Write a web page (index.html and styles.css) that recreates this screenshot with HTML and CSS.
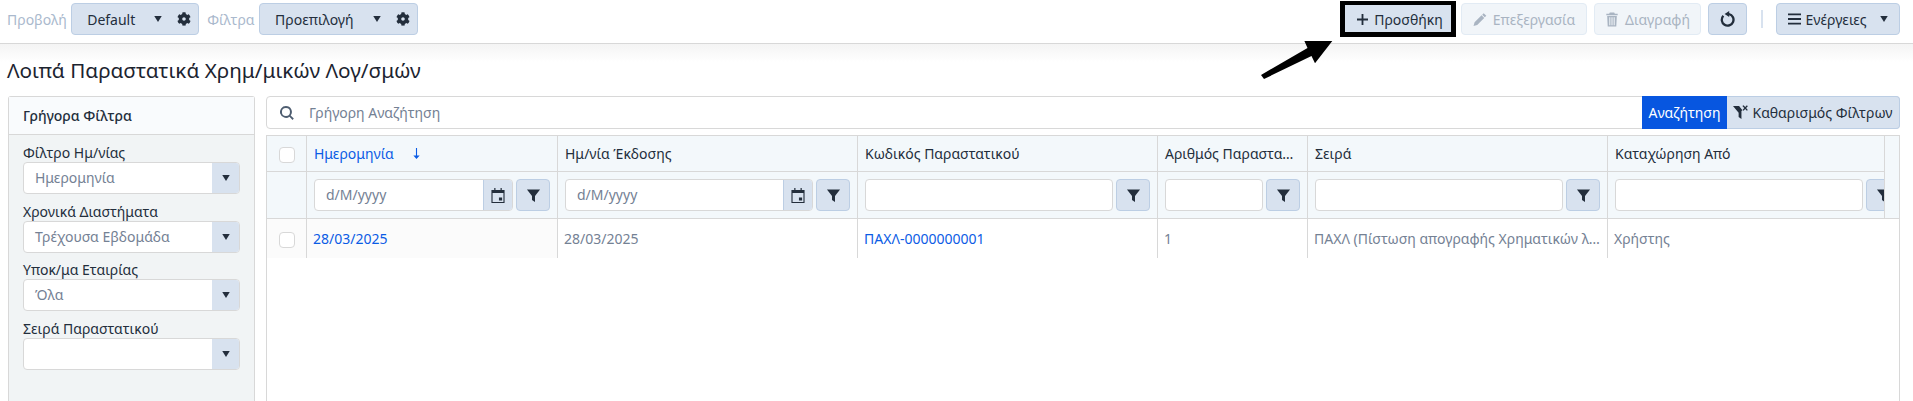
FILE: index.html
```html
<!DOCTYPE html>
<html lang="el">
<head>
<meta charset="utf-8">
<title>Λοιπά Παραστατικά</title>
<link rel="stylesheet" href="styles.css">
</head>
<body>
<svg class="defs" width="0" height="0" aria-hidden="true">
  <symbol id="i-gear" viewBox="0 0 512 512"><path d="M487.4 315.7l-42.6-24.6c4.3-23.2 4.3-47 0-70.2l42.6-24.6c4.9-2.8 7.1-8.6 5.5-14-11.1-35.6-30-67.8-54.7-94.6-3.8-4.1-10-5.1-14.8-2.3L380.8 110c-17.9-15.4-38.5-27.3-60.8-35.1V25.8c0-5.6-3.9-10.5-9.4-11.7-36.7-8.2-74.3-7.8-109.2 0-5.5 1.2-9.4 6.1-9.4 11.7V75c-22.2 7.9-42.8 19.8-60.8 35.1L88.7 85.5c-4.9-2.8-11-1.9-14.8 2.3-24.7 26.7-43.6 58.9-54.7 94.6-1.7 5.4.6 11.2 5.5 14L67.3 221c-4.3 23.2-4.3 47 0 70.2l-42.6 24.6c-4.9 2.8-7.1 8.6-5.5 14 11.1 35.6 30 67.8 54.7 94.6 3.8 4.1 10 5.1 14.8 2.3l42.6-24.6c17.9 15.4 38.5 27.3 60.8 35.1v49.2c0 5.6 3.9 10.5 9.4 11.7 36.7 8.2 74.3 7.8 109.2 0 5.5-1.2 9.4-6.1 9.4-11.7v-49.2c22.2-7.9 42.8-19.8 60.8-35.1l42.6 24.6c4.9 2.8 11 1.9 14.8-2.3 24.7-26.7 43.6-58.9 54.7-94.6 1.5-5.5-.7-11.3-5.6-14.1zM256 320c-35.300 0-64-28.700-64-64s28.700-64 64-64 64 28.700 64 64-28.700 64-64 64z"/></symbol>
  <symbol id="i-funnel" viewBox="0 0 16 16"><path d="M1 1.500h14L9.600 8.400V15L6.400 12.800V8.400z"/></symbol>
  <symbol id="i-cal" viewBox="1 0 14 16"><path d="M4 0h1.300v2h5.400V0H12v2h3v14H1V2h3zM2.200 5.400v9.400h11.600V5.400zM9 10h3.400v3.400H9z" fill-rule="evenodd"/></symbol>
  <symbol id="i-caret" viewBox="0 0 10 8"><path d="M0 0h10L5 8z"/></symbol>
</svg>

<header class="toolbar">
  <div class="tool-group">
    <span class="tool-label">Προβολή</span>
    <div class="view-select view-select-a">
      <span class="view-name">Default</span>
      <svg class="caret"><use href="#i-caret"/></svg>
      <svg class="gear"><use href="#i-gear"/></svg>
    </div>
    <span class="tool-label">Φίλτρα</span>
    <div class="view-select view-select-b">
      <span class="view-name">Προεπιλογή</span>
      <svg class="caret"><use href="#i-caret"/></svg>
      <svg class="gear"><use href="#i-gear"/></svg>
    </div>
  </div>
  <div class="tool-group tool-group-right">
    <button class="btn btn-add">
      <svg class="ico-plus" viewBox="0 0 12 12"><path d="M5 0h2v5h5v2H7v5H5V7H0V5h5z"/></svg>
      Προσθήκη
    </button>
    <button class="btn btn-off btn-edit">
      <svg class="ico-sm" viewBox="0 0 16 16"><path d="M12.200.8l3 3-1.700 1.700-3-3zM9.800 3.200l3 3-8 8L.6 15.400l1.200-4.200z"/></svg>
      Επεξεργασία
    </button>
    <button class="btn btn-off btn-del">
      <svg class="ico-sm" viewBox="0 0 16 16"><path d="M5.500 0h5l.8 1.500h3.200V3h-13V1.500h3.200zM2.500 4h11l-.6 12H3.100zM4.900 5.500v9h1.200v-9zM7.400 5.500v9h1.200v-9zM9.900 5.500v9h1.200v-9z" fill-rule="evenodd"/></svg>
      Διαγραφή
    </button>
    <button class="btn btn-refresh" aria-label="Ανανέωση">
      <svg class="ico-refresh" viewBox="0 0 16 16"><path d="M9.200 0L4.600 3l4.600 3V4.300a4.700 4.700 0 1 1-5 1.200L2.500 4.100a7 7 0 1 0 6.700-2.100z"/></svg>
    </button>
    <span class="tool-sep"></span>
    <button class="btn btn-actions">
      <svg class="ico-bars" viewBox="0 0 14 12"><path d="M0 0h14v2H0zM0 5h14v2H0zM0 10h14v2H0z"/></svg>
      Ενέργειες
      <svg class="caret caret-actions"><use href="#i-caret"/></svg>
    </button>
  </div>
</header>

<main class="page">
  <h1 class="page-title">Λοιπά Παραστατικά Χρημ/μικών Λογ/σμών</h1>
  <div class="content">
    <aside class="filters">
      <div class="filters-head">Γρήγορα Φίλτρα</div>
      <div class="filters-body">
        <div class="field">
          <label class="field-label">Φίλτρο Ημ/νίας</label>
          <div class="combo"><span class="combo-value">Ημερομηνία</span><span class="combo-arrow"><svg class="caret"><use href="#i-caret"/></svg></span></div>
        </div>
        <div class="field">
          <label class="field-label">Χρονικά Διαστήματα</label>
          <div class="combo"><span class="combo-value">Τρέχουσα Εβδομάδα</span><span class="combo-arrow"><svg class="caret"><use href="#i-caret"/></svg></span></div>
        </div>
        <div class="field">
          <label class="field-label">Υποκ/μα Εταιρίας</label>
          <div class="combo"><span class="combo-value">Όλα</span><span class="combo-arrow"><svg class="caret"><use href="#i-caret"/></svg></span></div>
        </div>
        <div class="field">
          <label class="field-label">Σειρά Παραστατικού</label>
          <div class="combo"><span class="combo-value"></span><span class="combo-arrow"><svg class="caret"><use href="#i-caret"/></svg></span></div>
        </div>
      </div>
    </aside>

    <section class="results">
      <div class="search">
        <svg class="ico-search" viewBox="0 0 16 16"><path d="M6.800 0a6.800 6.800 0 0 1 5.400 10.900l3.600 3.500-1.500 1.500-3.500-3.600A6.800 6.800 0 1 1 6.800 0zm0 2.200a4.600 4.600 0 1 0 0 9.200 4.600 4.600 0 0 0 0-9.200z"/></svg>
        <span class="search-text">Γρήγορη Αναζήτηση</span>
        <button class="search-go">Αναζήτηση</button>
        <button class="search-clear">
          <svg class="ico-clear" viewBox="0 0 16 16"><path d="M0 1h6.500L10 5.500l-1 1V15l-3-2.200V8.200z"/><path d="M10 1l1.200-.8 1.800 2 1.800-2 1 1-1.800 2 1.800 2-1 1-1.800-2-1.800 2-1-1 1.800-2z"/></svg>
          Καθαρισμός Φίλτρων
        </button>
      </div>

      <div class="grid-wrap">
        <div class="grid-head">
          <div class="grid-head-clip">
            <table class="grid">
              <colgroup>
                <col class="c-check"><col class="c-a"><col class="c-b"><col class="c-c"><col class="c-d"><col class="c-e"><col class="c-f">
              </colgroup>
              <thead>
                <tr class="head-row">
                  <th class="cell-check"><span class="check"></span></th>
                  <th class="th-sorted">Ημερομηνία <svg class="ico-sort" viewBox="0 0 8 14"><path d="M3.300 0h1.400v9.500H8L4 14 0 9.500h3.300z"/></svg></th>
                  <th>Ημ/νία Έκδοσης</th>
                  <th>Κωδικός Παραστατικού</th>
                  <th>Αριθμός Παραστατικού</th>
                  <th>Σειρά</th>
                  <th>Καταχώρηση Από</th>
                </tr>
                <tr class="filter-row">
                  <th class="cell-check"></th>
                  <th><div class="cell-filter"><div class="date-input"><span class="date-ph">d/M/yyyy</span><span class="date-btn"><svg class="ico-cal"><use href="#i-cal"/></svg></span></div><span class="filter-btn"><svg class="ico-funnel"><use href="#i-funnel"/></svg></span></div></th>
                  <th><div class="cell-filter"><div class="date-input"><span class="date-ph">d/M/yyyy</span><span class="date-btn"><svg class="ico-cal"><use href="#i-cal"/></svg></span></div><span class="filter-btn"><svg class="ico-funnel"><use href="#i-funnel"/></svg></span></div></th>
                  <th><div class="cell-filter"><div class="date-input"></div><span class="filter-btn"><svg class="ico-funnel"><use href="#i-funnel"/></svg></span></div></th>
                  <th><div class="cell-filter"><div class="date-input"></div><span class="filter-btn"><svg class="ico-funnel"><use href="#i-funnel"/></svg></span></div></th>
                  <th><div class="cell-filter"><div class="date-input"></div><span class="filter-btn"><svg class="ico-funnel"><use href="#i-funnel"/></svg></span></div></th>
                  <th><div class="cell-filter"><div class="date-input"></div><span class="filter-btn"><svg class="ico-funnel"><use href="#i-funnel"/></svg></span></div></th>
                </tr>
              </thead>
            </table>
          </div>
        </div>
        <table class="grid">
          <colgroup>
            <col class="c-check"><col class="c-a"><col class="c-b"><col class="c-c"><col class="c-d"><col class="c-e"><col class="c-f">
          </colgroup>
          <tbody>
            <tr class="data-row">
              <td class="cell-check frozen"><span class="check"></span></td>
              <td class="frozen"><a class="link">28/03/2025</a></td>
              <td>28/03/2025</td>
              <td><a class="link">ΠΑΧΛ-0000000001</a></td>
              <td>1</td>
              <td>ΠΑΧΛ (Πίστωση απογραφής Χρηματικών λογαριασμών)</td>
              <td class="td-last">Χρήστης</td>
            </tr>
          </tbody>
        </table>
      </div>
    </section>
  </div>
</main>

<div class="callout-box"></div>
<svg class="callout-arrow" viewBox="0 0 72 38" aria-hidden="true"><path d="M0 34L46.500 7 43.400 0H71.300L54 22.300 50.500 15 3 38z"/></svg>
</body>
</html>
```
FILE: styles.css
```css
* { box-sizing: border-box; }
html, body { margin: 0; padding: 0; }
body {
  height: 401px;
  overflow: hidden;
  background: #fff;
  color: #232e3c;
  font-family: "Noto Sans", "Open Sans", sans-serif;
  font-size: 14px;
  line-height: 19px;
}
.defs { position: absolute; }
button { font: inherit; color: inherit; margin: 0; cursor: pointer; }

/* toolbar */
.toolbar {
  height: 44px;
  padding: 3px 13px 0 7px;
  display: flex;
  justify-content: space-between;
  align-items: flex-start;
  border-bottom: 1px solid #d8d8d8;
}
.tool-group { display: flex; align-items: center; height: 32px; }
.tool-label { color: #aab9cd; margin-right: 4.5px; }
.view-select {
  height: 32px;
  display: flex;
  align-items: center;
  background: #d8e2ef;
  border: 1px solid #bccee4;
  border-radius: 4px;
  padding-left: 15px;
  margin-right: 8px;
}
.view-select-a { width: 128px; }
.view-select-b { width: 159px; }
.view-name { flex: 1; }
.caret { width: 8px; height: 6px; fill: #232e3c; display: block; }
.gear { width: 14px; height: 14px; fill: #232e3c; margin: 0 7px 0 15px; }

.btn {
  height: 32px;
  display: flex;
  align-items: center;
  justify-content: center;
  gap: 6px;
  padding: 0;
  background: #d8e2ef;
  border: 1px solid #bccee4;
  border-radius: 4px;
  white-space: nowrap;
}
.btn-add { width: 112px; margin-right: 7px; padding-left: 4px; }
.btn-off { background: #f1f5f9; border-color: #e2ebf4; color: #a9b4c2; }
.btn-edit { width: 126px; margin-right: 7px; }
.btn-del { width: 107px; margin-right: 7px; }
.btn-refresh { width: 39px; }
.btn-actions { width: 124px; gap: 4px; }
.tool-sep { width: 2px; height: 18px; background: #d8e2ef; margin: 0 13px 0 14px; }
.ico-plus { width: 11px; height: 11px; fill: #232e3c; }
.ico-sm { width: 14px; height: 15px; fill: #a9b4c2; }
.ico-refresh { width: 16px; height: 16px; fill: #232e3c; }
.ico-bars { width: 13px; height: 12px; fill: #232e3c; }
.caret-actions { margin-left: 9px; }

/* page */
.page {
  padding: 0 13px 0 8px;
  background: linear-gradient(#f4f4f4 0, #fff 18px);
  height: 357px;
  overflow: hidden;
}
.page-title {
  margin: 0 0 0 -1px;
  height: 52px;
  padding-top: 13px;
  font-size: 20.7px;
  line-height: 27px;
  font-weight: 400;
  color: #1c2430;
}
.content { display: flex; gap: 11px; align-items: stretch; height: 305px; }

/* filter panel */
.filters {
  width: 247px;
  flex: none;
  border: 1px solid #d8d8d8;
  border-bottom: 0;
  border-radius: 3px 3px 0 0;
  background: #f1f4f5;
}
.filters-head {
  height: 38px;
  padding: 0 14px;
  display: flex;
  align-items: center;
  background: #f9fbfd;
  border-bottom: 1px solid #d8d8d8;
  font-weight: 500;
}
.filters-body { padding: 8px 14px 0; }
.field { margin-bottom: 7.67px; }
.field-label { display: block; height: 19px; line-height: 19px; }
.combo {
  height: 32px;
  display: flex;
  background: #fff;
  border: 1px solid #d8d8d8;
  border-radius: 4px;
  overflow: hidden;
}
.combo-value { flex: 1; padding-left: 11px; line-height: 30px; color: #748194; }
.combo-arrow { width: 27px; background: #d8e2ef; display: flex; align-items: center; justify-content: center; }

/* search */
.results { flex: 1; min-width: 0; display: flex; flex-direction: column; gap: 6px; }
.search {
  height: 33px;
  flex: none;
  display: flex;
  align-items: center;
  border: 1px solid #d8d8d8;
  border-radius: 4px;
  padding-left: 13px;
}
.ico-search { width: 14px; height: 14px; fill: #4e5d70; margin-right: 15px; }
.search-text { flex: 1; color: #748194; }
.search-go {
  height: 33px;
  width: 85px;
  padding: 0;
  background: #0756e0;
  border: 0;
  color: #fff;
  margin-top: -1px;
  margin-bottom: -1px;
}
.search-clear {
  height: 33px;
  width: 173px;
  margin: -1px -1px -1px 0;
  padding: 0;
  display: flex;
  align-items: center;
  justify-content: center;
  gap: 4px;
  background: #d8e2ef;
  border: 1px solid #bccee4;
  border-left: 0;
  border-radius: 0 4px 4px 0;
  white-space: nowrap;
}
.ico-clear { width: 15px; height: 15px; fill: #232e3c; }

/* grid */
.grid-wrap {
  flex: 1;
  border-left: 1px solid #d8d8d8;
  border-right: 1px solid #d8d8d8;
  border-top: 1px solid #d8d8d8;
  overflow: hidden;
}
.grid-head { padding-right: 14px; background: #f3f8fb; border-bottom: 1px solid #d8d8d8; }
.grid-head-clip { overflow: hidden; border-right: 1px solid #d8d8d8; }
.grid { border-collapse: separate; border-spacing: 0; table-layout: fixed; width: 1592px; }
.c-check { width: 40px; }
.c-a { width: 251px; }
.c-b, .c-c, .c-e, .c-f { width: 300px; }
.c-d { width: 150px; }
.grid th, .grid td { border-right: 1px solid #d8d8d8; font-weight: 400; text-align: left; }
.grid th { padding: 0 7px; background: #f3f8fb; overflow: hidden; white-space: nowrap; text-overflow: ellipsis; }
.grid td { overflow: hidden; white-space: nowrap; text-overflow: ellipsis; color: #748194; height: 39px; padding: 0 6px; background: #fff; }
.grid .td-last { border-right: 0; }
.grid .frozen { background: #fbfbfb; }
.head-row th { height: 36px; border-bottom: 1px solid #d8d8d8; }
.filter-row th { height: 46px; }
.grid .cell-check { padding: 0; text-align: center; }
.check {
  display: inline-block;
  width: 16px;
  height: 16px;
  vertical-align: middle;
  background: #fff;
  border: 1px solid #d8d8d8;
  border-radius: 4px;
}
.grid .th-sorted { color: #0b5ce5; }
.ico-sort { width: 7px; height: 11px; fill: #0b5ce5; margin-left: 16px; }
.cell-filter { display: flex; gap: 3px; height: 32px; }
.date-input {
  flex: 1;
  min-width: 0;
  display: flex;
  background: #fff;
  border: 1px solid #d8d8d8;
  border-radius: 4px;
  overflow: hidden;
}
.date-ph { flex: 1; padding-left: 11px; line-height: 30px; color: #748194; }
.date-btn { width: 29px; background: #d8e2ef; border-left: 1px solid #bccee4; display: flex; align-items: center; justify-content: center; }
.filter-btn {
  width: 34px;
  flex: none;
  background: #d8e2ef;
  border: 1px solid #bccee4;
  border-radius: 4px;
  display: flex;
  align-items: center;
  justify-content: center;
}
.ico-cal { width: 14px; height: 15px; fill: #232e3c; }
.ico-funnel { width: 15px; height: 15px; fill: #232e3c; }
.link { color: #0b5ce5; }

/* annotation drawn over the screenshot */
.callout-box {
  position: absolute;
  left: 1340px;
  top: 1px;
  width: 116px;
  height: 36px;
  border: solid #000;
  border-width: 4px 5px 5px;
}
.callout-arrow {
  position: absolute;
  left: 1261px;
  top: 41px;
  width: 72px;
  height: 38px;
  fill: #000;
}
```
